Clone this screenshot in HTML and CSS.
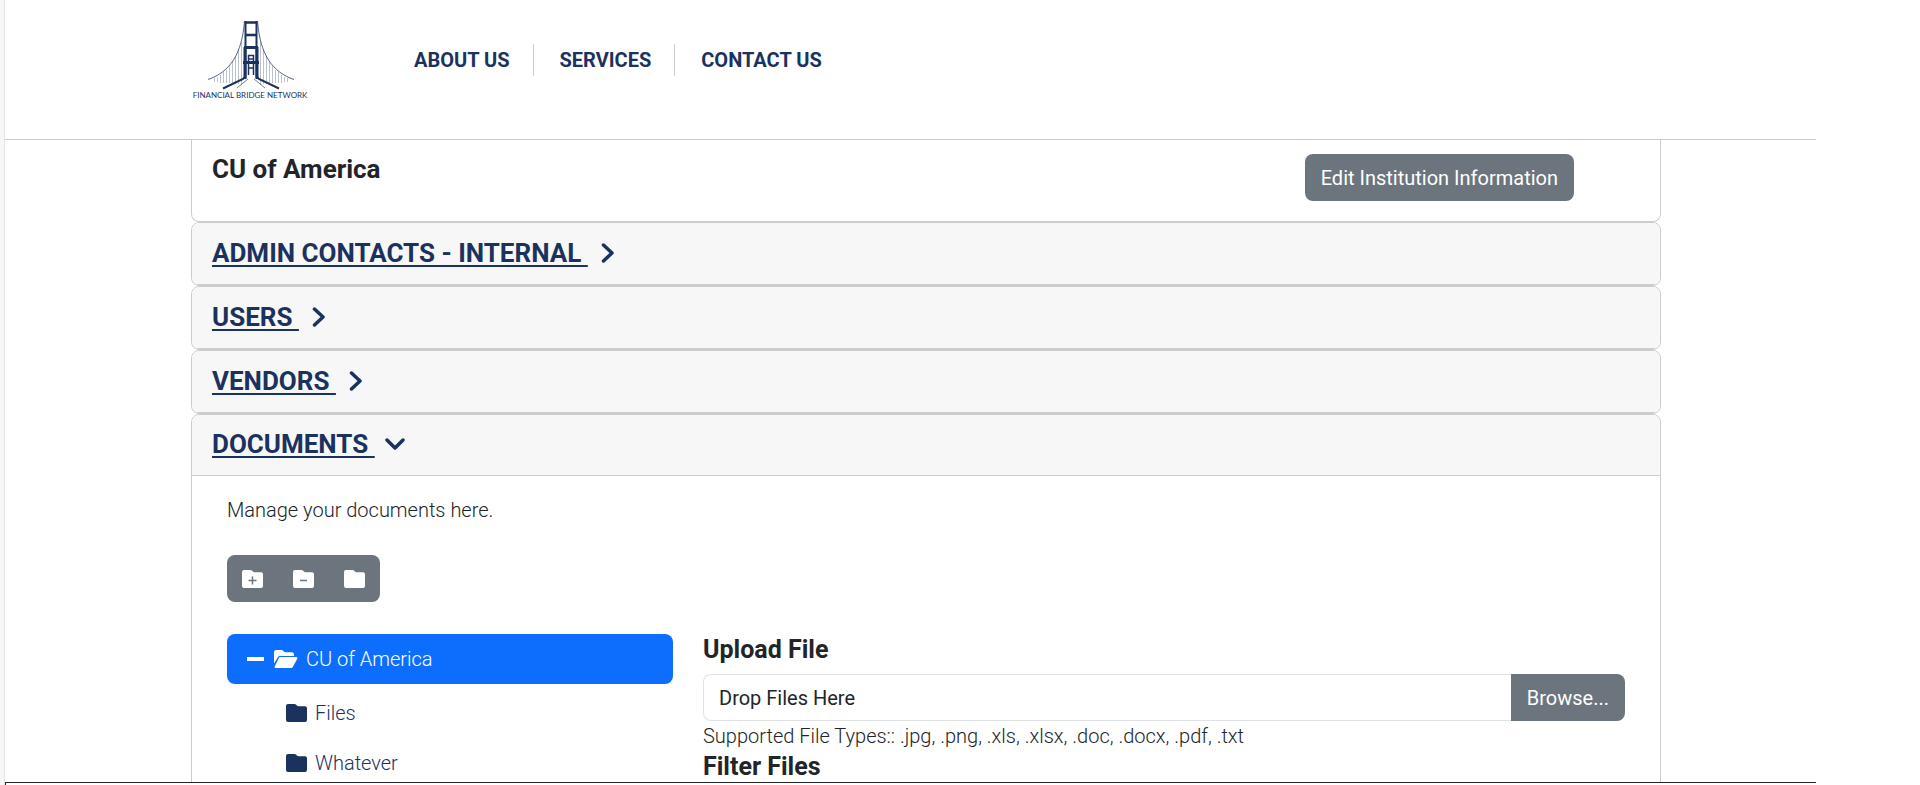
FILE: index.html
```html
<!DOCTYPE html>
<html lang="en">
<head>
  <meta charset="UTF-8">
  <title>CU of America - Financial Bridge Network</title>
  <meta name="viewport" content="width=device-width, initial-scale=1.0">
  <link rel="stylesheet" href="styles.css">
</head>
<body>
  <svg class="sprite" aria-hidden="true">
    <symbol id="folder" viewBox="0 0 21 18">
      <path d="M2 0h6.4c.6 0 1.100.2 1.500.6l1 1c.4.4.9.6 1.500.6H19a2 2 0 0 1 2 2V16a2 2 0 0 1-2 2H2a2 2 0 0 1-2-2V2a2 2 0 0 1 2-2z"/>
    </symbol>
    <symbol id="folder-open" viewBox="0 0 24 18">
      <path d="M0 13.500V2a2 2 0 0 1 2-2h5.400c.6 0 1.100.2 1.500.6l1 1c.4.4.9.6 1.500.6H18a2 2 0 0 1 2 2V6H6a2.600 2.600 0 0 0-2.300 1.400z"/>
      <path d="M6.200 7H22.500c.8 0 1.300.9.9 1.600l-4.600 8.400c-.4.6-.9 1-1.600 1H1.500c-.8 0-1.200-.8-.8-1.500L5 7.800c.3-.5.7-.8 1.200-.8z"/>
    </symbol>
    <symbol id="chevron" viewBox="0 0 14 20">
      <path d="M2.500 2l8.500 8-8.500 8" fill="none" stroke="currentColor" stroke-width="3.500" stroke-linecap="round" stroke-linejoin="round"/>
    </symbol>
    <symbol id="chevron-down" viewBox="0 0 20 12">
      <path d="M2 2l8 8 8-8" fill="none" stroke="currentColor" stroke-width="3.500" stroke-linecap="round" stroke-linejoin="round"/>
    </symbol>
  </svg>

  <div class="gutter"></div>
  <div class="page">
    <header class="site-header">
      <a class="logo" href="#" aria-label="Financial Bridge Network">
        <svg width="116" height="82" viewBox="0 0 116 82">
          <g fill="none" stroke="#1b325f">
            <!-- suspender cables -->
            <g stroke-width="1" opacity=".3">
              <path d="M49.500 22V65M46.500 30V64M43.500 37V64M40.500 42V64M37.500 46V63M34.500 50V63M31.500 52V63M28.500 55V63M25.500 57V62M22.500 58V62"/>
              <path d="M68.500 22V65M71.500 30V64M74.500 37V64M77.500 42V64M80.500 46V63M83.500 50V63M86.500 52V63M89.500 55V63M92.500 57V62M95.500 58V62"/>
            </g>
            <!-- main cables -->
            <path d="M52.500 1C50 34 38 52 16 59.500M65.500 1C68 34 80 52 102 59.500" stroke-width="1" opacity=".75"/>
            <!-- tower -->
            <path d="M53.500 1V58M64.500 1V58" stroke-width="2"/>
            <path d="M53 2.500H65M53 15H65" stroke-width="2.500"/>
            <path d="M52 27.500H66M51 42.500H67" stroke-width="3"/>
            <path d="M53 27V42M65 27V42M53 42V59M65 42V59" stroke-width="3"/>
            <!-- far tower -->
            <path d="M56.500 55V35.500H61.500V55M56.500 39H61.500M56.500 48H61.500" stroke-width="1.500"/>
            <!-- roadway -->
            <path d="M53 57L51 59 31 68.500" stroke-width="2"/>
            <path d="M65 57L67 59 87 68.500" stroke-width="2"/>
            <path d="M56 59L45 68M62 59L73 68" stroke-width="1" opacity=".6"/>
          </g>
          <text class="logo-text" x="58" y="78" text-anchor="middle">FINANCIAL BRIDGE NETWORK</text>
        </svg>
      </a>
      <nav class="main-nav">
        <a href="#">ABOUT US</a>
        <a href="#">SERVICES</a>
        <a href="#">CONTACT US</a>
      </nav>
    </header>

    <main class="content">
      <section class="card card-top">
        <h1 class="title">CU of America</h1>
        <button class="btn" type="button">Edit Institution Information</button>
      </section>

      <section class="card">
        <h2 class="card-header"><a href="#">ADMIN CONTACTS - INTERNAL&nbsp;</a><svg class="chevron"><use href="#chevron"/></svg></h2>
      </section>
      <section class="card">
        <h2 class="card-header"><a href="#">USERS&nbsp;</a><svg class="chevron"><use href="#chevron"/></svg></h2>
      </section>
      <section class="card">
        <h2 class="card-header"><a href="#">VENDORS&nbsp;</a><svg class="chevron"><use href="#chevron"/></svg></h2>
      </section>

      <section class="card card-open">
        <h2 class="card-header"><a href="#">DOCUMENTS&nbsp;</a><svg class="chevron-down"><use href="#chevron-down"/></svg></h2>
        <div class="card-body">
          <p class="intro">Manage your documents here.</p>

          <div class="toolbar">
            <button type="button" aria-label="Add folder">
              <svg class="folder" viewBox="0 0 21 18"><use href="#folder"/><path class="sign" d="M6.500 10.500h8M10.500 6.500v8"/></svg>
            </button>
            <button type="button" aria-label="Remove folder">
              <svg class="folder" viewBox="0 0 21 18"><use href="#folder"/><path class="sign" d="M7 10.500h7"/></svg>
            </button>
            <button type="button" aria-label="Rename folder">
              <svg class="folder" viewBox="0 0 21 18"><use href="#folder"/></svg>
            </button>
          </div>

          <div class="columns">
            <ul class="tree">
              <li><a class="node active" href="#"><span class="minus"></span><svg class="folder-open"><use href="#folder-open"/></svg>CU of America</a></li>
              <li><a class="node child" href="#"><svg class="folder"><use href="#folder"/></svg>Files</a></li>
              <li><a class="node child" href="#"><svg class="folder"><use href="#folder"/></svg>Whatever</a></li>
            </ul>

            <div class="files">
              <label class="section-title" for="upload">Upload File</label>
              <div class="input-group">
                <input id="upload" type="text" value="Drop Files Here" readonly>
                <button class="btn" type="button">Browse...</button>
              </div>
              <p class="hint">Supported File Types:: .jpg, .png, .xls, .xlsx, .doc, .docx, .pdf, .txt</p>
              <h3 class="section-title">Filter Files</h3>
            </div>
          </div>
        </div>
      </section>
    </main>
    <footer class="site-footer"></footer>
  </div>
</body>
</html>
```

FILE: styles.css
```css
:root {
  --navy: #1b325f;
  --text: #212529;
  --grey: #6c757d;
  --line: #cccccc;
  --blue: #0d6efd;
}

* {
  box-sizing: border-box;
}

body {
  margin: 0;
  display: flex;
  height: 100vh;
  overflow: hidden;
  font-family: Roboto, sans-serif;
  font-size: 20px;
  font-weight: 300;
  line-height: 30px;
  color: var(--text);
  background-color: #fff;
}

h1, h2, h3, p, ul {
  margin: 0;
  padding: 0;
}

a {
  color: var(--navy);
}

svg {
  flex: none;
  fill: currentColor;
}

.sprite {
  position: absolute;
  width: 0;
  height: 0;
}

.gutter {
  flex: none;
  width: 5px;
  background-color: #f7f7f7;
  border-right: 1px solid #e4e4e4;
}

.page {
  flex: 1;
  min-width: 0;
  margin-right: 104px;
  display: flex;
  flex-direction: column;
}

/* header */
.site-header {
  flex: none;
  display: flex;
  align-items: flex-start;
  height: 140px;
  padding: 20px 187px;
  border-bottom: 1px solid var(--line);
}

.logo svg {
  display: block;
}

.logo-text {
  font-family: Lato, sans-serif;
  font-size: 8px;
  font-weight: 400;
  fill: var(--navy);
}

.main-nav {
  display: flex;
  margin: 24px 0 0 80px;
}

.main-nav a {
  padding: 0 23px 0 26px;
  line-height: 32px;
  font-weight: 700;
  text-decoration: none;
  border-right: 1px solid var(--line);
}

.main-nav a:last-child {
  border-right: 0;
}

/* cards */
.content {
  flex: 1;
  min-height: 0;
  overflow: hidden;
  padding: 0 155px 0 186px;
}

.card {
  overflow: hidden;
  border: 1px solid var(--line);
  border-radius: 8px;
}

.card-top {
  display: flex;
  justify-content: space-between;
  align-items: flex-start;
  padding: 14px 86px 20px 20px;
  border-top: 0;
  border-radius: 0 0 8px 8px;
}

.title {
  font-size: 26px;
  font-weight: 700;
}

.btn {
  height: 47px;
  padding: 0 16px;
  font: 400 20px Roboto, sans-serif;
  color: #fff;
  background-color: var(--grey);
  border: 0;
  border-radius: 8px;
}

.card-header {
  display: flex;
  align-items: center;
  gap: 13px;
  height: 62px;
  padding: 0 20px 2px;
  font-size: 26px;
  font-weight: 700;
  color: var(--navy);
  background-color: #f7f7f7;
  border-bottom: 1px solid var(--line);
}

.card-open .card-header {
  gap: 10px;
  height: 61px;
}

.card-header a {
  text-decoration-thickness: 2px;
  text-underline-offset: 3px;
}

.chevron {
  width: 14px;
  height: 20px;
}

.chevron-down {
  width: 20px;
  height: 12px;
}

.card-body {
  padding: 19px 35px;
}

.toolbar {
  display: inline-flex;
  margin: 30px 0 32px;
  overflow: hidden;
  background-color: var(--grey);
  border-radius: 8px;
}

.toolbar button {
  display: flex;
  align-items: center;
  justify-content: center;
  width: 51px;
  height: 47px;
  padding: 0;
  color: #fff;
  background: none;
  border: 0;
}

.folder {
  width: 21px;
  height: 18px;
}

.folder-open {
  width: 24px;
  height: 18px;
}

.sign {
  fill: none;
  stroke: var(--grey);
  stroke-width: 1.5;
}

.columns {
  display: grid;
  grid-template-columns: 446px 1fr;
  gap: 30px;
}

/* folder tree */
.tree {
  list-style: none;
}

.node {
  display: flex;
  align-items: center;
  gap: 8px;
  height: 50px;
  padding: 0 20px;
  text-decoration: none;
  border-radius: 8px;
}

.node.child {
  padding-left: 59px;
}

.node.active {
  margin-bottom: 4px;
  color: #fff;
  background-color: var(--blue);
}

.minus {
  width: 17px;
  height: 4px;
  margin-right: 2px;
  background-color: #fff;
}

/* upload */
.section-title {
  display: block;
  font-size: 25px;
  font-weight: 700;
  line-height: 32px;
}

.input-group {
  display: flex;
  margin-top: 8px;
}

.input-group input {
  flex: 1;
  min-width: 0;
  height: 47px;
  padding: 0 15px;
  font: 400 20px Roboto, sans-serif;
  color: var(--text);
  background-color: #fff;
  border: 1px solid #dee2e6;
  border-right: 0;
  border-radius: 8px 0 0 8px;
}

.input-group .btn {
  border-radius: 0 8px 8px 0;
}

.site-footer {
  flex: none;
  height: 3px;
  border-top: 1px solid #212529;
  border-left: 1px solid #212529;
}
```
